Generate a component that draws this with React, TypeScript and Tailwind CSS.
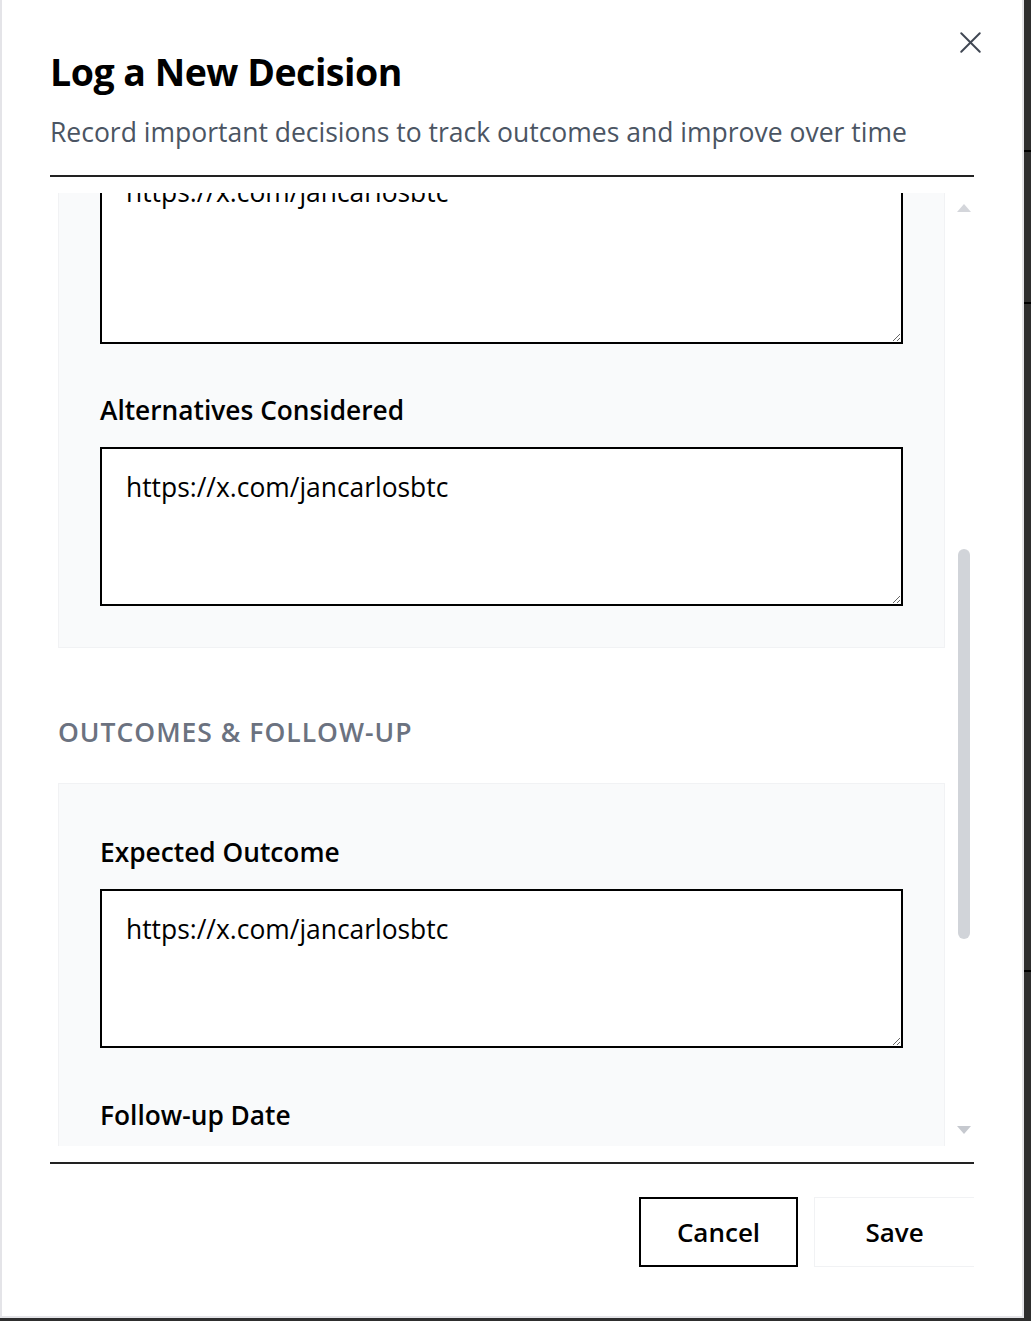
import React from 'react';
import { X } from 'lucide-react';

const font = { fontFamily: '"Open Sans", "Noto Sans", sans-serif' };

function Field({ label, value }: { label: string; value: string }) {
  return (
    <div>
      <label className="block text-[26.3px] leading-[36px] font-semibold text-black mb-[19px]">{label}</label>
      <Area value={value} h="h-[159px]" />
    </div>
  );
}

function Area({ value, h }: { value: string; h: string }) {
  return (
    <textarea
      readOnly
      defaultValue={value}
      className={`block w-full ${h} border-2 border-black bg-white px-[24px] pt-[20px] text-[26.4px] leading-[36px] text-black outline-none`}
      style={font}
    />
  );
}

export default function App() {
  const url = 'https://x.com/jancarlosbtc';
  return (
    <div className="flex h-[1321px] w-full bg-[#2e2e2e] overflow-hidden" style={font}>
      <div className="w-[1024px] h-[1318px] shrink-0 bg-white border-x-2 border-b-2 border-[#e4e4e8] flex flex-col px-[48px]">
        {/* header */}
        <div className="relative pt-[49px] pb-[25px] border-b-2 border-[#222]">
          <button className="absolute right-[-15px] top-[24px] text-[#3f4652]">
            <X size={37} strokeWidth={1.3} />
          </button>
          <h2 className="text-[37.5px] leading-[46px] font-bold text-black tracking-[-0.5px]">Log a New Decision</h2>
          <p className="mt-[19px] text-[26.5px] leading-[36px] text-[#4b5563]">
            Record important decisions to track outcomes and improve over time
          </p>
        </div>

        {/* scroll area */}
        <div className="mt-[16px] h-[953px] flex overflow-hidden">
          <div className="flex-1 overflow-hidden px-[8px]">
            <div className="-mt-[84px]">
              <div className="bg-[#f9fafb] border border-[#f1f2f4] px-[41px] pt-[42px] pb-[41px]">
                <Area value={url} h="h-[192px]" />
                <div className="mt-[48px]">
                  <Field label="Alternatives Considered" value={url} />
                </div>
              </div>

              <h3 className="mt-[66px] mb-[33px] text-[26.5px] leading-[36px] font-semibold uppercase tracking-[1px] text-[#6b7280]">
                Outcomes &amp; Follow-up
              </h3>

              <div className="bg-[#f9fafb] border border-[#f1f2f4] px-[41px] pt-[50px] pb-[41px]">
                <Field label="Expected Outcome" value={url} />
                <div className="mt-[49px]">
                  <label className="block text-[26.3px] leading-[36px] font-semibold text-black">Follow-up Date</label>
                  <div className="mt-[19px] h-[70px] border-2 border-black bg-white" />
                </div>
              </div>
            </div>
          </div>

          {/* scrollbar */}
          <div className="w-[21px] flex flex-col items-center pt-[11px] pb-[12px]">
            <div className="w-0 h-0 border-x-[7px] border-x-transparent border-b-[8px] border-b-[#d4d6db]" />
            <div className="mt-[337px] w-[12px] h-[390px] rounded-full bg-[#d1d4d9]" />
            <div className="flex-1" />
            <div className="w-0 h-0 border-x-[7px] border-x-transparent border-t-[8px] border-t-[#c6c9cf]" />
          </div>
        </div>

        {/* footer */}
        <div className="mt-[16px] border-t-2 border-[#222] pt-[33px] flex justify-end gap-[16px]">
          <button className="w-[159px] h-[70px] border-2 border-black bg-white text-[26px] font-semibold text-black">
            Cancel
          </button>
          <button className="w-[160px] h-[70px] border border-[#f1f2f4] border-r-0 bg-white text-[26px] font-semibold text-black">
            Save
          </button>
        </div>
      </div>

      {/* backdrop strip */}
      <div className="flex-1 flex flex-col">
        <div className="h-[150px]" />
        <div className="h-[2px] bg-black" />
        <div className="h-[150px]" />
        <div className="h-[2px] bg-black" />
        <div className="h-[666px]" />
        <div className="h-[2px] bg-black" />
      </div>
    </div>
  );
}
